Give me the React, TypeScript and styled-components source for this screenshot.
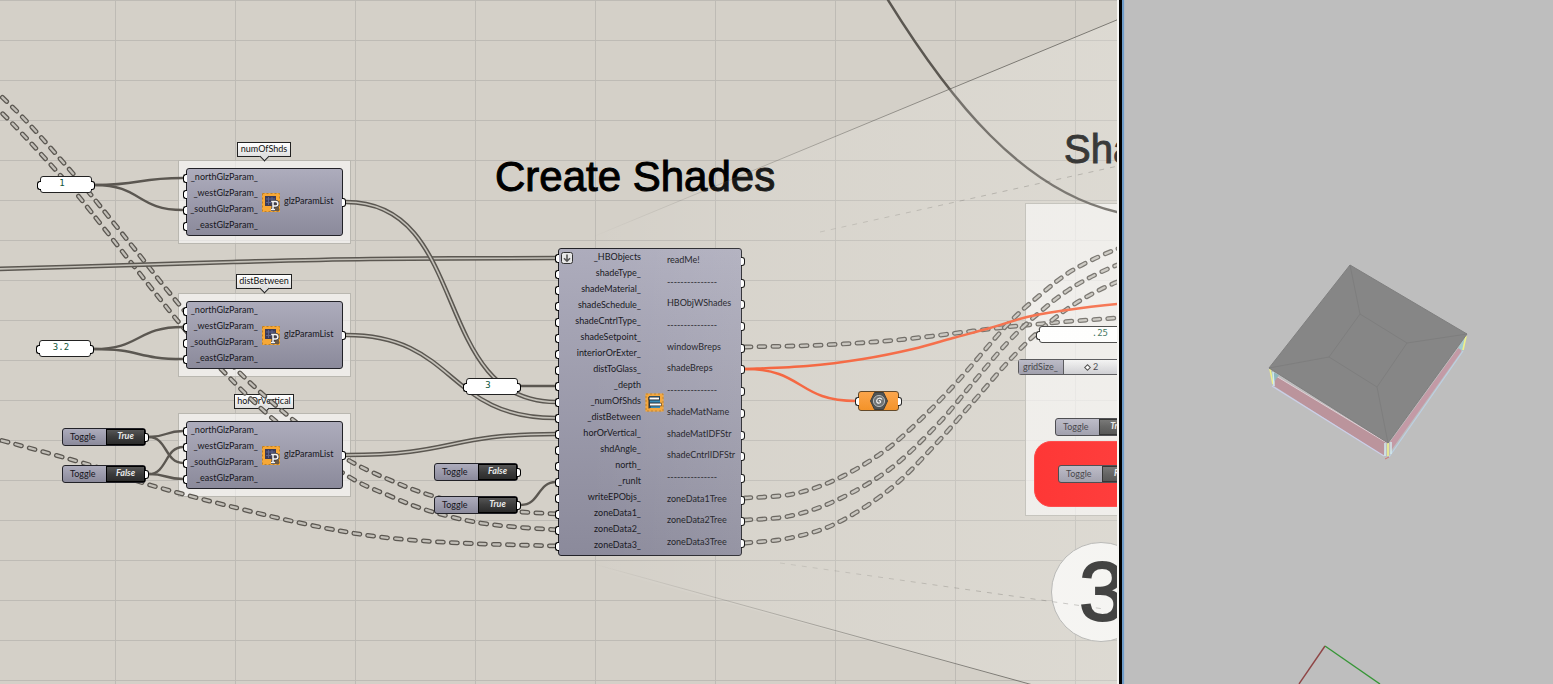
import React from "react";
import styled, { createGlobalStyle, css } from "styled-components";

type Point = [number, number];

const GlobalStyle = createGlobalStyle`
  * { box-sizing: border-box; }
  body {
    margin: 0;
    background: #bebebe;
    font-family: "Lato", "Open Sans", sans-serif;
    font-size: 9px;
    line-height: 12px;
    color: #16161c;
  }
`;

const Page = styled.main`
  display: flex;
  min-height: 100vh;
  overflow: hidden;
`;

const Canvas = styled.section`
  position: relative;
  isolation: isolate;
  flex: 1;
  min-width: 0;
  overflow: hidden;
  background-color: #d4d0c8;
  background-image: linear-gradient(#bebbb5 1px, transparent 1px), linear-gradient(90deg, #bebbb5 1px, transparent 1px);
  background-size: 100% 40px, 120px 100%;
  background-position: 0 0, 115px 0;
`;

const Divider = styled.div`
  flex: none;
  width: 8px;
  background: linear-gradient(90deg, #f6f6f4 2px, #000 2px 5px, #6f9cc8 5px 7px, #b4bac2 7px);
`;

const Viewport = styled.section`
  flex: none;
  width: 428px;
  overflow: hidden;
  background: #bebebe;
  svg { display: block; }
`;

const Layer = styled.svg`
  position: absolute;
  inset: 0;
  width: 100%;
  height: 100%;
  overflow: visible;
  pointer-events: none;
`;

interface Place { $x: number; $y: number }
const placed = css<Place>`
  position: absolute;
  left: ${(p) => p.$x}px;
  top: ${(p) => p.$y}px;
`;

const Group = styled.div<Place & { $w: number; $h: number }>`
  ${placed}
  width: ${(p) => p.$w}px;
  height: ${(p) => p.$h}px;
  background: rgba(255, 255, 255, 0.58);
  border: 1px solid #b9b7b0;
`;

const Tag = styled.div<Place & { $w: number }>`
  ${placed}
  width: ${(p) => p.$w}px;
  height: 15px;
  border: 1px solid #222;
  background: linear-gradient(#fff, #e0e0e0);
  line-height: 12px;
  font-size: 9px;
  text-align: center;
  color: #111;
  &::after {
    content: "";
    position: absolute;
    left: 50%;
    bottom: -4px;
    width: 6px;
    height: 6px;
    margin-left: -3px;
    background: #e0e0e0;
    border: solid #222;
    border-width: 0 1px 1px 0;
    transform: rotate(45deg);
  }
`;

const Heading = styled.h1<Place & { $size: number; $color: string }>`
  ${placed}
  margin: 0;
  font: 400 ${(p) => p.$size}px/48px "Liberation Sans", Arial, sans-serif;
  color: ${(p) => p.$color};
  -webkit-text-stroke: 1px ${(p) => p.$color};
  white-space: nowrap;
`;

const StepBadge = styled.div<Place>`
  ${placed}
  width: 100px;
  height: 100px;
  padding-left: 27px;
  border: 1px solid #a8a8a6;
  border-radius: 50%;
  background: #f4f3f1;
  font: 400 84px/96px "Liberation Sans", Arial, sans-serif;
  color: #111;
  -webkit-text-stroke: 2px #111;
`;

const RedBlock = styled.div<Place>`
  ${placed}
  width: 130px;
  height: 66px;
  border-radius: 17px;
  border: 1px solid #f22;
  background: #ff0808;
`;

const shell = css`
  border: 1px solid #222228;
  border-radius: 3px;
  background: linear-gradient(#adacbc, #8b8a9b);
`;

const Component = styled.article<Place & { $w: number }>`
  ${placed}
  ${shell}
  width: ${(p) => p.$w}px;
  padding: 1px 0;
  display: grid;
  align-items: center;
`;

const ListComponent = styled(Component)`
  grid-template-columns: 71px 26px 1fr;
`;

const ShadeComponent = styled(Component)`
  grid-template-columns: 82px 26px 1fr;
`;

const Ports = styled.ul<{ $side: "in" | "out" }>`
  display: flex;
  flex-direction: column;
  align-self: stretch;
  justify-content: center;
  margin: 0;
  padding: 0;
  list-style: none;
  text-align: ${(p) => (p.$side === "in" ? "right" : "left")};
`;

const port = css<{ $side: "in" | "out" }>`
  &::before {
    content: "";
    position: absolute;
    top: 50%;
    ${(p) => (p.$side === "in" ? "left: -4px;" : "right: -4px;")}
    width: 3px;
    height: 7px;
    margin-top: -4px;
    background: #fff;
    border: 1px solid #000;
    ${(p) =>
      p.$side === "in"
        ? "border-right: 0; border-radius: 3px 0 0 3px;"
        : "border-left: 0; border-radius: 0 3px 3px 0;"}
  }
`;

const PortRow = styled.li<{ $side: "in" | "out"; $grow?: boolean }>`
  position: relative;
  display: flex;
  align-items: center;
  justify-content: ${(p) => (p.$side === "in" ? "flex-end" : "flex-start")};
  flex: ${(p) => (p.$grow ? "1 1 0" : "0 0 16px")};
  padding-bottom: 2px;
  line-height: 12px;
  white-space: nowrap;
  ${port}
`;

const IconCell = styled.span`
  display: flex;
  justify-content: center;
`;

const Corner = styled.span`
  position: absolute;
  left: 2px;
  top: 3px;
  display: flex;
`;

const Dock = styled.div<Place & { $w: number; $h: number }>`
  ${placed}
  width: ${(p) => p.$w}px;
  height: ${(p) => p.$h}px;
`;

const Port = styled.i<{ $side: "in" | "out" }>`
  position: absolute;
  inset: 0 1px;
  pointer-events: none;
  ${port}
`;

const PanelInput = styled.input<{ $end?: boolean }>`
  display: block;
  width: 100%;
  height: 100%;
  padding: ${(p) => (p.$end ? "0 22px 4px 0" : "0 8px 4px 0")};
  border: 1px solid #222;
  border-radius: 3px;
  background: #fff;
  font: 9px/12px "DejaVu Sans Mono", monospace;
  text-align: ${(p) => (p.$end ? "right" : "center")};
  color: #0c5438;
  outline: none;
`;

const ToggleShell = styled.div`
  ${shell}
  display: flex;
  align-items: center;
  height: 100%;
`;

const ToggleName = styled.span`
  flex: 1;
  padding-left: 7px;
  line-height: 14px;
`;

const ToggleValue = styled.button`
  width: 39px;
  height: 16px;
  padding: 0 0 2px;
  border: 1px solid #000;
  background: linear-gradient(#555 , #3c3c3c 50%, #2b2b2b);
  font: italic 700 9px/12px "Lato", sans-serif;
  color: #e8e8e8;
`;

const SliderShell = styled.label`
  display: flex;
  height: 100%;
  border: 1px solid #333338;
  border-radius: 3px;
  background: linear-gradient(#f2f2f2, #c4c4ca);
  line-height: 14px;
`;

const SliderName = styled.span`
  width: 45px;
  padding-left: 4px;
  border-right: 1px solid #333338;
  background: linear-gradient(#adacbc, #8b8a9b);
`;

const SliderTrack = styled.span`
  position: relative;
  flex: 1;
  padding-left: 29px;
`;

const SliderInput = styled.input`
  position: absolute;
  left: 6px;
  top: 6px;
  width: 80px;
  height: 3px;
  margin: 0;
  appearance: none;
  background: transparent;
  &::-webkit-slider-thumb {
    appearance: none;
    width: 5px;
    height: 5px;
    border: 1px solid #222;
    background: #fff;
    transform: rotate(45deg);
  }
`;

const BrepParam = styled.div`
  height: 100%;
  display: flex;
  align-items: center;
  justify-content: center;
  border: 1px solid #4a2c08;
  border-radius: 3px;
  background: linear-gradient(#fb9730, #f28208);
`;

/* ---------- wires ---------- */

const smooth = (pts: Point[]) => {
  let d = `M${pts[0][0]} ${pts[0][1]}`;
  for (let i = 0; i < pts.length - 1; i++) {
    const a = pts[i - 1] ?? pts[i];
    const b = pts[i];
    const c = pts[i + 1];
    const e = pts[i + 2] ?? c;
    d += `C${b[0] + (c[0] - a[0]) / 6} ${b[1] + (c[1] - a[1]) / 6} ${c[0] - (e[0] - b[0]) / 6} ${c[1] - (e[1] - b[1]) / 6} ${c[0]} ${c[1]}`;
  }
  return d;
};

const link = (x1: number, y1: number, x2: number, y2: number, pull = 0.53) => {
  const h = (x2 - x1) * pull;
  return `M${x1} ${y1}C${x1 + h} ${y1} ${x2 - h} ${y2} ${x2} ${y2}`;
};

const wireDark = "#5b5751";

const TreeWire = ({ d }: { d: string }) => (
  <g fill="none" strokeLinecap="round" strokeDasharray="6 8">
    <path d={d} stroke={wireDark} strokeWidth="4.8" />
    <path d={d} stroke="#c2bfb8" strokeWidth="2.3" />
  </g>
);

const ListWire = ({ d }: { d: string }) => (
  <g fill="none">
    <path d={d} stroke={wireDark} strokeWidth="4.6" />
    <path d={d} stroke="#c4c1b9" strokeWidth="1.6" />
  </g>
);

const ItemWire = ({ d, color = wireDark }: { d: string; color?: string }) => (
  <path d={d} fill="none" stroke={color} strokeWidth="2.4" />
);

const treeWires: Point[][] = [
  [[-8, 88], [2, 97], [30, 125], [76, 177], [100, 206], [133, 247], [182, 308], [237, 370], [292, 419], [345, 458], [390, 480], [433, 496], [490, 509], [557, 514]],
  [[-8, 105], [2, 113], [30, 142], [60, 175], [80, 198], [133, 265], [182, 326], [222, 370], [272, 418], [343, 473], [390, 496], [433, 512], [487, 524], [557, 530]],
  [[-8, 438], [0, 440], [90, 465], [150, 485], [237, 508], [310, 525], [380, 537], [460, 543], [557, 546]],
  [[745, 347], [823, 345], [897, 340], [973, 331], [1027, 325], [1117, 318], [1180, 316]],
  [[745, 498], [793, 494], [837, 479], [883, 452], [920, 420], [957, 382], [1007, 325], [1040, 295], [1073, 270], [1117, 249], [1160, 236]],
  [[745, 520], [790, 516], [837, 500], [890, 469], [937, 425], [972, 384], [1007, 343], [1040, 312], [1073, 287], [1117, 265], [1160, 252]],
  [[745, 543], [790, 538], [837, 523], [890, 489], [933, 447], [973, 402], [1007, 363], [1037, 333], [1073, 305], [1117, 282], [1160, 270]],
];

const Wires = () => (
  <Layer aria-hidden="true">
    <ItemWire d="M884 -6L888 0C950 100 1022 190 1117 212L1160 220" />
    {treeWires.map((pts, i) => <TreeWire key={i} d={smooth(pts)} />)}
    <ListWire d={smooth([[-4, 269], [100, 266], [233, 262], [370, 259], [557, 258]])} />
    <ListWire d={link(346, 202, 556, 402, 0.6)} />
    <ListWire d={link(346, 335, 556, 418)} />
    <ListWire d={link(346, 455, 556, 434)} />
    <ItemWire d={link(95, 185, 183, 178)} />
    <ItemWire d={link(95, 185, 183, 210)} />
    <ItemWire d={link(94, 349, 183, 327)} />
    <ItemWire d={link(94, 349, 183, 359)} />
    <ItemWire d={link(149, 437, 183, 431)} />
    <ItemWire d={link(149, 437, 183, 463)} />
    <ItemWire d={link(149, 474, 183, 447)} />
    <ItemWire d={link(149, 474, 183, 479)} />
    <ItemWire d={link(520, 386, 556, 386)} />
    <ItemWire d={link(521, 505, 556, 482)} />
    <ItemWire color="#f4552b" d={smooth([[745, 369], [807, 366], [863, 359], [913, 349], [953, 338], [990, 328], [1027, 317], [1060, 311], [1117, 304], [1180, 300]])} />
    <ItemWire color="#f4552b" d={link(745, 369, 856, 401)} />
  </Layer>
);

/* Pale cone that magnifies the next step of the definition. */
const Cone = () => (
  <Layer aria-hidden="true">
    <defs>
      <linearGradient id="cone" gradientUnits="userSpaceOnUse" x1="590" x2="1117" y1="0" y2="0">
        <stop offset="0" stopColor="#fff" stopOpacity="0" />
        <stop offset="0.3" stopColor="#fbfbf6" stopOpacity="0.1" />
        <stop offset="1" stopColor="#fbfbf6" stopOpacity="0.22" />
      </linearGradient>
      <linearGradient id="edge" gradientUnits="userSpaceOnUse" x1="590" x2="1000" y1="0" y2="0">
        <stop offset="0" stopColor="#55534e" stopOpacity="0" />
        <stop offset="1" stopColor="#55534e" stopOpacity="0.7" />
      </linearGradient>
    </defs>
    <path d="M590 238L1117 20L1240 -31V741L590 566Z" fill="url(#cone)" />
    <g fill="none" stroke="url(#edge)">
      <path d="M590 238L1240 -31" />
      <path d="M590 563L1240 742" />
      <path d="M820 232L1240 139" strokeDasharray="5 6" opacity="0.4" />
      <path d="M780 563L1104 609" strokeDasharray="5 6" opacity="0.4" />
    </g>
  </Layer>
);

/* ---------- icons ---------- */

const ParamIcon = () => (
  <svg width="18" height="19" viewBox="0 0 18 19" role="img" aria-label="Glazing parameters">
    <rect width="18" height="19" fill="#f7a836" />
    <rect x="0.5" y="0.5" width="17" height="18" fill="none" stroke="#b9802e" strokeDasharray="2 2" />
    <rect x="3" y="3" width="11" height="10" fill="#3a3a58" />
    <path d="M4 6h9M4 9.500h9M6.500 4v8M10 4v8" stroke="#5c648c" />
    <path d="M9 11h4l4 3v4h-4z" fill="#6c5a44" />
    <path d="M11 16.500V8.500h2.600a2.300 2.300 0 0 1 0 4.600H11M9 16.500h4M9.200 8.500H12" fill="none" stroke="#3a3a42" strokeWidth="3" />
    <path d="M11 16.500V8.500h2.600a2.300 2.300 0 0 1 0 4.600H11M9 16.500h4M9.200 8.500H12" fill="none" stroke="#f4f4f4" strokeWidth="1.500" />
  </svg>
);

const ShadeIcon = () => (
  <svg width="19" height="19" viewBox="0 0 19 19" role="img" aria-label="Shades">
    <rect x="0.5" y="0.5" width="18" height="18" fill="#f5a436" />
    <rect x="1" y="1" width="17" height="17" fill="none" stroke="#b9802e" strokeDasharray="2 2" />
    <rect x="4" y="3" width="11" height="12" fill="#22506e" />
    <path d="M5 8.500h10M6 14h9" stroke="#2e86b4" strokeWidth="2" />
    <path d="M3.500 5.500h11M4.500 11.500h12" stroke="#222" strokeWidth="3.400" />
    <path d="M4 5.500h10M5 11.500h11" stroke="#fff" strokeWidth="2" />
    <path d="M4 15.500V4" stroke="#222" />
  </svg>
);

const DownIcon = () => (
  <svg width="12" height="12" viewBox="0 0 12 12" role="img" aria-label="Flatten">
    <rect x="0.5" y="0.5" width="11" height="11" rx="2" fill="#e6e6e6" stroke="#333" />
    <path d="M6 2.500V9M3 6.200L6 9.200L9 6.200" fill="none" stroke="#555" strokeWidth="1.600" />
  </svg>
);

const BrepIcon = () => (
  <svg width="20" height="18" viewBox="0 0 20 18" role="img" aria-label="Brep">
    <path d="M5.500 0.500H14.500L18.500 9L14.500 17.500H5.500L1.500 9Z" fill="#33383a" stroke="#1c1f20" />
    <circle cx="10" cy="9" r="5.600" fill="#595e60" stroke="#a9adae" />
    <path d="M10 9c1-1 2.200.5 1.200 1.600c-1.600 1.400-3.900 0-3.500-2c.4-2.600 3.900-3.300 5.500-1.100" fill="none" stroke="#f2f2f2" strokeWidth="1.200" />
  </svg>
);

/* ---------- nodes ---------- */

const glzInputs = ["_northGlzParam_", "_westGlzParam_", "_southGlzParam_", "_eastGlzParam_"];

const glzLists = [
  { tag: "numOfShds", y: 168, tagX: 237, tagW: 54, tagY: 142 },
  { tag: "distBetween", y: 301, tagX: 236, tagW: 56, tagY: 274 },
  { tag: "horOrVertical", y: 421, tagX: 234, tagW: 60, tagY: 394 },
];

const shadeInputs = [
  "_HBObjects", "shadeType_", "shadeMaterial_", "shadeSchedule_", "shadeCntrlType_", "shadeSetpoint_",
  "interiorOrExter_", "distToGlass_", "_depth", "_numOfShds", "_distBetween", "horOrVertical_", "shdAngle_",
  "north_", "_runIt", "writeEPObjs_", "zoneData1_", "zoneData2_", "zoneData3_",
];

const rule = "---------------";
const shadeOutputs = [
  "readMe!", rule, "HBObjWShades", rule, "windowBreps", "shadeBreps", rule, "shadeMatName",
  "shadeMatIDFStr", "shadeCntrlIDFStr", rule, "zoneData1Tree", "zoneData2Tree", "zoneData3Tree",
];

const GlzList = ({ y }: { y: number }) => (
  <ListComponent $x={186} $y={y} $w={157}>
    <Ports $side="in">
      {glzInputs.map((name) => <PortRow key={name} $side="in">{name}</PortRow>)}
    </Ports>
    <IconCell><ParamIcon /></IconCell>
    <Ports $side="out">
      <PortRow $side="out">glzParamList</PortRow>
    </Ports>
  </ListComponent>
);

const Panel = ({ x, y, w = 52, value, label, end }: { x: number; y: number; w?: number; value: string; label: string; end?: boolean }) => (
  <Dock $x={x} $y={y} $w={w} $h={17}>
    <Port $side="in" />
    <Port $side="out" />
    <PanelInput aria-label={label} defaultValue={value} $end={end} />
  </Dock>
);

const Toggle = ({ x, y, value }: { x: number; y: number; value: string }) => {
  const id = `toggle-${x}-${y}`;
  return (
    <Dock $x={x} $y={y} $w={84} $h={18}>
      <Port $side="out" />
      <ToggleShell>
        <ToggleName id={id}>Toggle</ToggleName>
        <ToggleValue type="button" aria-describedby={id}>{value}</ToggleValue>
      </ToggleShell>
    </Dock>
  );
};

const Model = () => (
  <svg width="428" height="684" viewBox="0 0 428 684" role="img" aria-label="Shaded zone model">
    <path d="M151 376L261 442L259 456L149 386Z" fill="#bb949c" />
    <path d="M265 442L337 343L336 352L265 452Z" fill="#c39aa6" />
    <path d="M147 386L259 456" stroke="#ccd0ea" strokeWidth="1.200" />
    <path d="M264 457L338 351" stroke="#bcd0e4" strokeWidth="1.200" />
    <path d="M151 376L262 443" stroke="#dfd0d6" />
    <path d="M146 371L154 375L149 382V387Z" fill="#8fb7bd" />
    <path d="M341 336L333 348L338 351Z" fill="#a4cccf" />
    <path d="M145 369L148 384M263 443V456M341 336L338 350" stroke="#eff08a" strokeWidth="1.600" />
    <path d="M148 372L149 386M260 443V456M266 442V454" stroke="#d2ebf0" strokeWidth="1.500" />
    <path d="M260 459L264 457" stroke="#cf7474" />
    <path d="M225 265L342 334L263 443L144 368Z" fill="#868686" stroke="#7f7f7f" />
    <path d="M235 314L282 343L252 387L204 357ZM225 265L235 314M342 334L282 343M263 443L252 387M144 368L204 357" fill="none" stroke="#7e7e7e" />
    <path d="M200 646L174 684" stroke="#8f4646" strokeWidth="1.400" />
    <path d="M200 646L255 684" stroke="#379637" strokeWidth="1.400" />
  </svg>
);

export default function App() {
  return (
    <>
      <GlobalStyle />
      <Page>
        <Canvas aria-label="Definition canvas">
          {glzLists.map((g) => (
            <React.Fragment key={g.tag}>
              <Group $x={178} $y={g.y - 8} $w={173} $h={84} />
              <Tag $x={g.tagX} $y={g.tagY} $w={g.tagW}>{g.tag}</Tag>
            </React.Fragment>
          ))}
          <Group $x={1025} $y={203} $w={200} $h={313} />
          <RedBlock $x={1034} $y={441} />
          <StepBadge $x={1051} $y={542}>3</StepBadge>
          <Heading $x={495} $y={153} $size={42} $color="#000">Create Shades</Heading>
          <Heading as="h2" $x={1064} $y={125} $size={40} $color="#050505">Sha</Heading>
          <Wires />

          {glzLists.map((g) => <GlzList key={g.tag} y={g.y} />)}

          <ShadeComponent $x={558} $y={248} $w={184}>
            <Ports $side="in">
              {shadeInputs.map((name) => <PortRow key={name} $side="in">{name}</PortRow>)}
            </Ports>
            <IconCell><ShadeIcon /></IconCell>
            <Ports $side="out">
              {shadeOutputs.map((name, i) => <PortRow key={i} $side="out" $grow>{name}</PortRow>)}
            </Ports>
            <Corner><DownIcon /></Corner>
          </ShadeComponent>

          <Panel x={40} y={176} value="1" label="Number of shades" />
          <Panel x={39} y={340} value="3.2" label="Distance between" />
          <Panel x={466} y={378} value="3" label="Depth" />
          <Panel x={1039} y={326} w={92} value=".25" label="Offset" end />
          <Toggle x={62} y={428} value="True" />
          <Toggle x={62} y={465} value="False" />
          <Toggle x={434} y={463} value="False" />
          <Toggle x={434} y={496} value="True" />
          <Toggle x={1055} y={418} value="True" />
          <Toggle x={1058} y={465} value="Run" />

          <Dock $x={1018} $y={359} $w={150} $h={16}>
            <SliderShell>
              <SliderName>gridSize_</SliderName>
              <SliderTrack>
                <SliderInput type="range" min={0} max={10} defaultValue={2} />
                2
              </SliderTrack>
            </SliderShell>
          </Dock>

          <Dock $x={858} $y={391} $w={41} $h={20}>
            <Port $side="in" />
            <Port $side="out" />
            <BrepParam><BrepIcon /></BrepParam>
          </Dock>
          <Cone />
        </Canvas>
        <Divider />
        <Viewport aria-label="Model view"><Model /></Viewport>
      </Page>
    </>
  );
}
